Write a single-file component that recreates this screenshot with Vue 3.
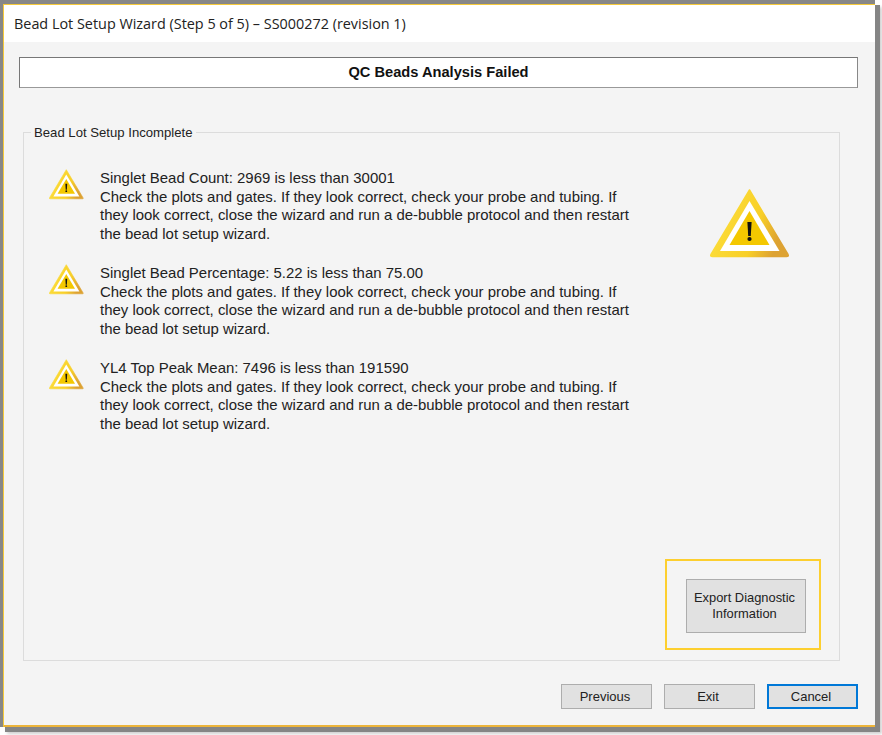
<script setup>
const messages = [
  { title: 'Singlet Bead Count: 2969 is less than 30001' },
  { title: 'Singlet Bead Percentage: 5.22 is less than 75.00' },
  { title: 'YL4 Top Peak Mean: 7496 is less than 191590' },
]
</script>

<template>
  <div class="page">
    <div class="window">
      <div class="titlebar">Bead Lot Setup Wizard (Step 5 of 5) – SS000272 (revision 1)</div>
      <div class="content">
        <div class="banner">QC Beads Analysis Failed</div>
        <div class="group">
          <div class="legend">Bead Lot Setup Incomplete</div>
          <div class="upper">
            <div class="messages">
              <div v-for="m in messages" :key="m.title" class="message">
                <svg class="icon-small" viewBox="0 0 80 72">
                  <use href="#warn" />
                </svg>
                <div class="message-text">
                  {{ m.title }}<br />
                  Check the plots and gates. If they look correct, check your probe and tubing. If<br />
                  they look correct, close the wizard and run a de-bubble protocol and then restart<br />
                  the bead lot setup wizard.
                </div>
              </div>
            </div>
            <svg class="icon-large" viewBox="0 0 80 72">
              <defs>
                <linearGradient id="rim" x1="0" y1="0" x2="1" y2="0.3">
                  <stop offset="0" stop-color="#fde23f" />
                  <stop offset="0.7" stop-color="#f8cf28" />
                  <stop offset="1" stop-color="#dda232" />
                </linearGradient>
                <g id="warn">
                  <path d="M39.5 1 L78 65.5 Q79 67.5 76.5 67.5 L2.5 67.5 Q0 67.5 1 65.5 Z" fill="url(#rim)" stroke="url(#rim)" stroke-width="1.5" stroke-linejoin="round" />
                  <path d="M39.5 12 L69.5 62 L10 62 Z" fill="#fff" />
                  <path d="M39.5 22 L59.5 56 L19.5 56 Z" fill="#f4c800" />
                  <path d="M37.4 33 h4.2 l-0.8 14 h-2.6 Z" fill="#111" />
                  <circle cx="39.5" cy="50" r="2.1" fill="#111" />
                </g>
              </defs>
              <use href="#warn" />
            </svg>
          </div>
          <div class="export-row">
            <div class="highlight">
              <button class="btn export">Export Diagnostic<br />Information</button>
            </div>
          </div>
        </div>
        <div class="footer">
          <button class="btn nav">Previous</button>
          <button class="btn nav">Exit</button>
          <button class="btn nav primary">Cancel</button>
        </div>
      </div>
    </div>
  </div>
</template>

<style>
html, body { margin: 0; background: #fff; }
</style>

<style scoped>
.page {
  width: 882px;
  height: 735px;
  box-sizing: border-box;
  overflow: hidden;
  background: #fff;
  font-family: "Liberation Sans", Arial, sans-serif;
  color: #1a1a1a;
}
.window {
  width: 875px;
  height: 727px;
  box-sizing: border-box;
  display: flex;
  flex-direction: column;
  background: #f4f4f4;
  border-top: 4px solid #878787;
  border-left: 3px solid #878787;
  box-shadow: 5px 5px 0 0 #858585, 7px 7px 3px 0 #cfcfcf;
  position: relative;
}
.window::before {
  content: "";
  position: absolute;
  inset: 0;
  border: 1px solid #f5c93a;
  border-right: none;
  border-bottom: 2px solid #ecb43a;
  pointer-events: none;
}
.titlebar {
  height: 38px;
  flex: none;
  box-sizing: border-box;
  padding: 11px 0 0 11px;
  background: #fff;
  font-family: "Open Sans", "Noto Sans", sans-serif;
  font-size: 14.4px;
  line-height: 18px;
  color: #222;
  white-space: nowrap;
}
.content {
  flex: 1;
  display: flex;
  flex-direction: column;
  padding: 15px 15px 0 16px;
  min-height: 0;
}
.banner {
  height: 31px;
  box-sizing: border-box;
  width: 839px;
  border: 1px solid #777;
  border-right-color: #888;
  border-bottom-color: #999;
  background: #fff;
  text-align: center;
  font-size: 14.65px;
  line-height: 29px;
  font-weight: 700;
  color: #111;
}
.group {
  position: relative;
  margin: 44px 0 0 4px;
  width: 817px;
  height: 529px;
  box-sizing: border-box;
  border: 1px solid #dcdcdc;
  display: flex;
  flex-direction: column;
  padding: 36px 0 0 0;
}
.legend {
  position: absolute;
  left: 7px;
  top: -9px;
  padding: 0 3px;
  background: #f4f4f4;
  font-size: 13.15px;
  line-height: 17px;
  color: #222;
}
.upper {
  display: flex;
  align-items: flex-start;
  flex: 1;
}
.messages {
  display: flex;
  flex-direction: column;
  gap: 20.6px;
  width: 680px;
  padding-left: 25px;
  box-sizing: border-box;
}
.message {
  display: flex;
  align-items: flex-start;
}
.icon-small {
  width: 35px;
  height: 32px;
  flex: none;
}
.message-text {
  margin-left: 16px;
  font-size: 14.95px;
  line-height: 18.6px;
  color: #222;
  white-space: nowrap;
}
.icon-large {
  width: 80px;
  height: 72px;
  flex: none;
  margin: 20px 0 0 6px;
}
.export-row {
  display: flex;
  justify-content: flex-end;
  padding: 0 18px 10px 0;
}
.highlight {
  width: 156px;
  height: 91px;
  box-sizing: border-box;
  border: 2px solid #fdcf2f;
  display: flex;
  align-items: flex-start;
  padding: 18px 0 0 19px;
}
.btn {
  box-sizing: border-box;
  background: #e1e1e1;
  border: 1px solid #adadad;
  font-family: inherit;
  font-size: 13px;
  color: #222;
  padding: 0 3px 0 0;
  outline: none;
}
.export {
  width: 120px;
  height: 54px;
  line-height: 16px;
  font-size: 12.9px;
}
.footer {
  display: flex;
  justify-content: flex-end;
  gap: 12px;
  margin-top: 23px;
  padding-right: 2px;
}
.nav {
  width: 91px;
  height: 25px;
  line-height: 21px;
}
.primary {
  border: 2px solid #0078d7;
}
</style>
